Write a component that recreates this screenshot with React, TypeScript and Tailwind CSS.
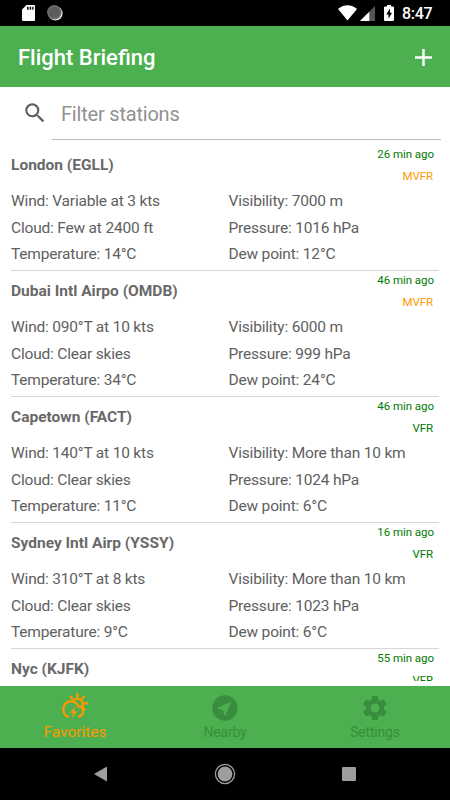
import React from 'react'
import { MdAdd, MdSearch, MdSettings } from 'react-icons/md'

interface Station {
  name: string
  age: string
  category: 'VFR' | 'MVFR'
  details: string[]
}

const stations: Station[] = [
  {
    name: 'London (EGLL)',
    age: '26 min ago',
    category: 'MVFR',
    details: ['Wind: Variable at 3 kts', 'Visibility: 7000 m', 'Cloud: Few at 2400 ft', 'Pressure: 1016 hPa', 'Temperature: 14°C', 'Dew point: 12°C'],
  },
  {
    name: 'Dubai Intl Airpo (OMDB)',
    age: '46 min ago',
    category: 'MVFR',
    details: ['Wind: 090°T at 10 kts', 'Visibility: 6000 m', 'Cloud: Clear skies', 'Pressure: 999 hPa', 'Temperature: 34°C', 'Dew point: 24°C'],
  },
  {
    name: 'Capetown (FACT)',
    age: '46 min ago',
    category: 'VFR',
    details: ['Wind: 140°T at 10 kts', 'Visibility: More than 10 km', 'Cloud: Clear skies', 'Pressure: 1024 hPa', 'Temperature: 11°C', 'Dew point: 6°C'],
  },
  {
    name: 'Sydney Intl Airp (YSSY)',
    age: '16 min ago',
    category: 'VFR',
    details: ['Wind: 310°T at 8 kts', 'Visibility: More than 10 km', 'Cloud: Clear skies', 'Pressure: 1023 hPa', 'Temperature: 9°C', 'Dew point: 6°C'],
  },
  {
    name: 'Nyc (KJFK)',
    age: '55 min ago',
    category: 'VFR',
    details: [],
  },
]

const StatusBar: React.FC = () => (
  <div className="flex h-[26px] shrink-0 items-center bg-black pl-[22px] pr-[18px] text-white">
    <svg className="h-4 w-[13px]" viewBox="0 0 13 16">
      <path d="M4.5 0H12a1 1 0 0 1 1 1v14a1 1 0 0 1-1 1H1a1 1 0 0 1-1-1V4.5z" fill="#fff" />
      <path d="M5 1.8h1.6v3H5zM7.6 1.8h1.6v3H7.6zM10.2 1.8h1.4v3h-1.4z" fill="#111" />
    </svg>
    <svg className="ml-3 h-4 w-4" viewBox="0 0 16 16">
      <circle cx="8.4" cy="8.4" r="7.2" fill="#e8e8e8" />
      <circle cx="7.3" cy="7.3" r="7.2" fill="#5c5c5c" />
      <circle cx="7.3" cy="7.3" r="6.2" fill="none" stroke="#888" strokeWidth="1.2" strokeDasharray="1 1" />
    </svg>
    <svg className="ml-auto h-4 w-[19px]" viewBox="0 0 19 16">
      <path d="M9.5 15.6 0 4Q4 .2 9.5.2T19 4z" fill="#fff" />
    </svg>
    <svg className="ml-[3px] h-4 w-[15px]" viewBox="0 0 15 16">
      <path d="M15 1v15H0z" fill="#555" />
      <path d="M9.3 6.7V16H0z" fill="#fff" />
    </svg>
    <svg className="ml-[9px] h-4 w-[10px]" viewBox="0 0 10 16">
      <path d="M3 0h4v1.6h2a1 1 0 0 1 1 1V15a1 1 0 0 1-1 1H1a1 1 0 0 1-1-1V2.6a1 1 0 0 1 1-1h2z" fill="#fff" />
      <path d="M6 3.4 2.3 9.5h2.2v4.3L8 7.8H6z" fill="#000" />
    </svg>
    <span className="ml-[8px] mt-[2px] w-[30px] whitespace-nowrap text-[16px] leading-none font-medium tracking-[-0.3px]">8:47</span>
  </div>
)

const StationCard: React.FC<{ station: Station }> = ({ station }) => (
  <div className="mx-[11px] h-[126px] shrink-0 border-b border-[#d6d6d6]">
    <div className="flex h-[47px] justify-between">
      <h2 className="pt-[10px] text-[15.5px] leading-[20px] font-bold text-[#696969]">{station.name}</h2>
      <div className="pr-[5px] text-right text-[11.5px] leading-[22px] tracking-[-0.05px]">
        <p className="-mt-[2px] text-[#007a00]">{station.age}</p>
        <p className={station.category === 'MVFR' ? 'pr-px text-[#ff9800]' : 'pr-px text-[#007a00]'}>{station.category}</p>
      </div>
    </div>
    <div className="-mt-[4px] grid grid-cols-[217.5px_1fr] text-[15.5px] leading-[26.7px] tracking-[-0.19px] text-[#606060]">
      {station.details.map((detail) => (
        <p key={detail} className="whitespace-nowrap">{detail}</p>
      ))}
    </div>
  </div>
)

const StormIcon: React.FC = () => (
  <svg className="h-[26px] w-[26px]" viewBox="0 0 26 26" fill="none" stroke="currentColor" strokeWidth="2.3">
    <path d="M15.3 0v4.5M21.5 10.3H26M7.8 3.2l3 2.9M22.6 3l-3.2 3.2M20.3 14.3l3 2.900" />
    <path d="M11.3 7.5c3.6-3.3 9.7-1.2 9.7 3.5 0 1.5-.6 2.9-1.6 4" />
    <path d="M7 23.500H5C2.6 22.100 1.4 19.5 1.4 16.5 1.4 11.200 4.800 8.300 8.900 8.300c3.300 0 6.200 2 7.200 5 3.200.1 5 2.200 5 4.900 0 2.700-1.600 4.700-4 5.300H16" />
    <path d="m13.300 13.600-5.300 6.200h3.100l-1.400 5.600 5.600-7.200h-3.300z" fill="currentColor" stroke="none" />
  </svg>
)

const NearbyIcon: React.FC = () => (
  <svg className="h-[26px] w-[26px]" viewBox="0 0 26 26">
    <circle cx="13" cy="13" r="12.7" fill="currentColor" />
    <path d="M19.5 6.5 5.5 12.7v1.1l5.4 1.4 1.4 5.3h1z" fill="#4caf50" />
  </svg>
)

const App: React.FC = () => (
  <div className="flex h-[800px] w-[450px] flex-col overflow-hidden bg-white font-[Roboto,sans-serif]">
    <StatusBar />
    <header className="flex h-[61px] shrink-0 items-center justify-between bg-[#4caf50] pl-[18px] pr-[12px] pt-[2px] text-white">
      <h1 className="text-[22px] leading-none font-medium">Flight Briefing</h1>
      <MdAdd className="size-[29px]" />
    </header>

    <div className="flex h-[53px] shrink-0 pl-[22px] pr-[9px]">
      <MdSearch className="mt-[13px] size-[26px] text-[#606060]" />
      <div className="ml-[4px] flex-1 border-b border-[#bdbdbd] pl-[9px] pt-[14px] text-[20px] leading-[27px] tracking-[-0.2px] text-[#919191]">
        Filter stations
      </div>
    </div>

    <main className="mb-[5px] flex h-[541px] shrink-0 flex-col overflow-hidden pt-[5px]">
      {stations.map((station) => (
        <StationCard key={station.name} station={station} />
      ))}
    </main>

    <nav className="grid h-[62px] shrink-0 grid-cols-3 bg-[#4caf50] text-[#388e3c]">
      <div className="flex flex-col items-center pt-[7px] text-[#ff9800]">
        <StormIcon />
        <span className="mt-[4px] text-[15.5px] leading-[18px]">Favorites</span>
      </div>
      <div className="flex flex-col items-center pt-[9px]">
        <NearbyIcon />
        <span className="mt-[2px] text-[14px] leading-[18px] tracking-[-0.2px]">Nearby</span>
      </div>
      <div className="flex flex-col items-center pt-[7px]">
        <MdSettings className="size-[30px]" />
        <span className="text-[14px] leading-[18px] tracking-[-0.2px]">Settings</span>
      </div>
    </nav>

    <div className="flex h-[52px] shrink-0 items-center bg-black pl-[94px]">
      <svg className="h-4 w-[13px]" viewBox="0 0 13 16">
        <path d="M13 .5v15L0 8z" fill="#9e9e9e" />
      </svg>
      <svg className="ml-[107px] h-[22px] w-[22px]" viewBox="0 0 22 22">
        <circle cx="11" cy="11" r="9.6" fill="none" stroke="#9e9e9e" strokeWidth="1.3" />
        <circle cx="11" cy="11" r="7.4" fill="#9e9e9e" />
      </svg>
      <div className="ml-[106px] size-[14px] rounded-[1px] bg-[#9e9e9e]" />
    </div>
  </div>
)

export default App
